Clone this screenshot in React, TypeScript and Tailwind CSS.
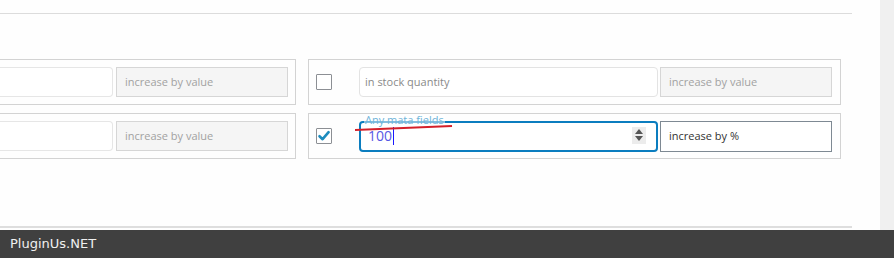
import React from "react";

const sans = { fontFamily: '"Open Sans", "Noto Sans", sans-serif' };

function Checkbox({ checked }: { checked?: boolean }) {
  return (
    <div className="w-[16px] h-[16px] shrink-0 border border-[#8c8f94] bg-white rounded-[1px] flex items-center justify-center">
      {checked && (
        <svg width="14" height="14" viewBox="0 0 14 14">
          <path d="M2.5 7.2 L5.6 10.2 L11.6 3.2" fill="none" stroke="#1e8cbe" strokeWidth="2.6" strokeLinecap="round" strokeLinejoin="round" />
        </svg>
      )}
    </div>
  );
}

function GrayBox({ text }: { text: string }) {
  return (
    <div className="w-[172px] h-[30px] shrink-0 bg-[#f5f5f5] border border-[#d6d6d6] flex items-center pl-[8px] text-[11px] text-[#a2a2a2]">
      {text}
    </div>
  );
}

function LeftCard() {
  return (
    <div className="w-[296px] h-[46px] shrink-0 border-y border-r border-[#d3d3d3] flex items-center gap-[3px] pr-[7px]">
      <div className="w-[113px] h-[30px] shrink-0 border-y border-r border-[#e6e6e6] rounded-r-[4px] bg-white" />
      <GrayBox text="increase by value" />
    </div>
  );
}

export default function App() {
  return (
    <div className="w-[894px] h-[258px] flex flex-col bg-[#f0f0f0] overflow-hidden" style={sans}>
      <div className="flex-1 flex">
        <div className="w-[880px] bg-[#fefefe] flex flex-col">
          <div className="h-[13px]" />
          <div className="w-[852px] h-px bg-[#dcdcdc]" />
          <div className="h-[45px]" />
          <div className="flex flex-col gap-[8px]">
            <div className="flex gap-[12px]">
              <LeftCard />
              <div className="w-[533px] h-[46px] border border-[#d3d3d3] flex items-center pl-[7px] pr-[8px]">
                <Checkbox />
                <div className="w-[27px]" />
                <div className="w-[299px] h-[30px] shrink-0 border border-[#e3e3e3] rounded-[4px] bg-white flex items-center pl-[5px] text-[11px] text-[#8a8a8a]">
                  in stock quantity
                </div>
                <div className="w-[2px]" />
                <GrayBox text="increase by value" />
              </div>
            </div>
            <div className="flex gap-[12px]">
              <LeftCard />
              <div className="w-[533px] h-[46px] border border-[#d3d3d3] flex items-center pl-[7px] pr-[8px]">
                <Checkbox checked />
                <div className="w-[27px]" />
                <div className="relative w-[299px] h-[31px] shrink-0 border-2 border-[#0b7dbf] rounded-[4px] bg-white flex items-center pl-[7px]">
                  <span className="text-[14px] text-[#5757e4] leading-none">100</span>
                  <span className="w-px h-[18px] bg-[#1a1aff] ml-[1px]" />
                  <div className="absolute right-[10px] top-[4px] w-[14px] h-[17px] bg-[#ececec] flex flex-col items-center justify-center gap-[2px]">
                    <svg width="8" height="5" viewBox="0 0 8 5"><path d="M0 5 L4 0 L8 5 Z" fill="#555" /></svg>
                    <svg width="8" height="5" viewBox="0 0 8 5"><path d="M0 0 L4 5 L8 0 Z" fill="#555" /></svg>
                  </div>
                  <span className="absolute left-[3px] top-[-9px] text-[11px] leading-[12px] text-[#6fb4d9] bg-white/50 px-[1px]">
                    Any mata fields
                  </span>
                  <svg className="absolute left-[-6px] top-[1px]" width="100" height="8" viewBox="0 0 100 8">
                    <path d="M0 6 L97 2" stroke="#d4202a" strokeWidth="2" />
                  </svg>
                </div>
                <div className="w-[2px]" />
                <div className="w-[172px] h-[31px] shrink-0 bg-white border border-[#7e8993] flex items-center pl-[8px] text-[11px] text-[#333]">
                  increase by %
                </div>
              </div>
            </div>
          </div>
          <div className="flex-1" />
          <div className="w-[852px] h-[2px] bg-[#dedede]" />
          <div className="h-[2px]" />
        </div>
        <div className="w-[14px]" />
      </div>
      <div className="h-[28px] bg-[#404040] flex items-center pl-[10px]">
        <span className="text-[13px] text-[#f0f0f0]" style={{ fontFamily: '"DejaVu Sans", sans-serif' }}>
          PluginUs.NET
        </span>
      </div>
    </div>
  );
}
